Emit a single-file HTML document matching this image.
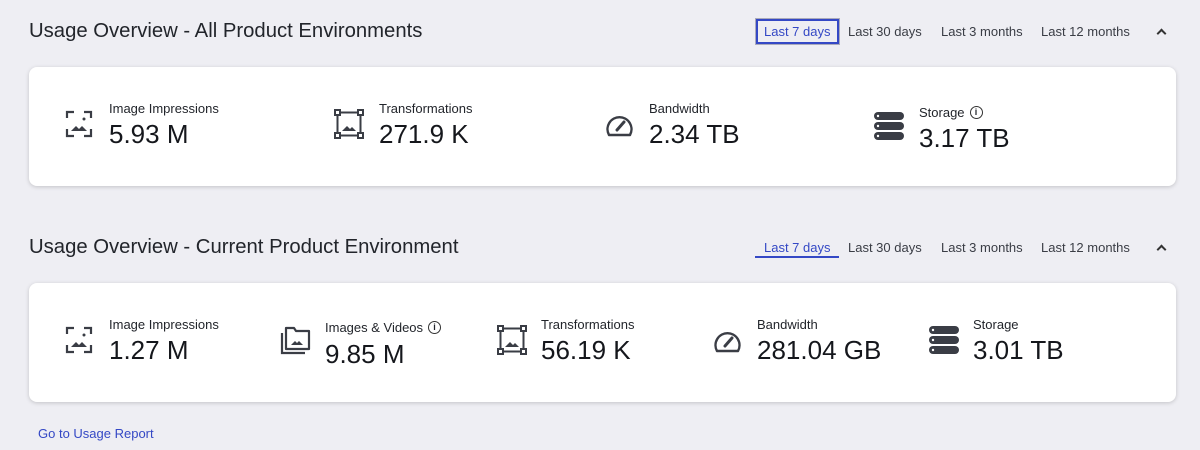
<!DOCTYPE html>
<html><head><meta charset="utf-8"><style>
*{margin:0;padding:0;box-sizing:border-box}
body{width:1200px;height:450px;background:#eeeef3;font-family:"Liberation Sans",sans-serif;color:#22252b;position:relative;overflow:hidden}
.a{position:absolute;white-space:nowrap}
.t{font-size:20.3px;color:#22252b}
.tab{font-size:13px;color:#3a3d45;top:24px}
.card{position:absolute;left:29px;width:1147px;height:119px;background:#fff;border-radius:8px;box-shadow:0 1px 4px rgba(0,0,0,.18)}
.l{font-size:13px;color:#22252b}
.v{font-size:26px;color:#15171c}
svg{position:absolute}
.info{display:inline-block;width:13px;height:13px;border:1.3px solid #333;border-radius:50%;font-size:9px;text-align:center;line-height:11px;margin-left:5px;vertical-align:2px;font-weight:bold}
.chev{position:absolute;width:7px;height:7px;border-left:2px solid #333;border-top:2px solid #333;transform:rotate(45deg)}
</style></head><body>
<div class="a t" style="left:29px;top:20px">Usage Overview - All Product Environments</div>
<div class="a" style="left:756px;top:19px;width:83px;height:25px;border:2px solid #3448c5;box-shadow:0 0 0 1px #aab"></div>
<div class="a tab" style="left:764px;color:#3448c5">Last 7 days</div>
<div class="a tab" style="left:848px">Last 30 days</div>
<div class="a tab" style="left:941px">Last 3 months</div>
<div class="a tab" style="left:1041px">Last 12 months</div>
<div class="chev" style="left:1158px;top:30px"></div>

<div class="card" style="top:67px"></div>
<svg style="left:65px;top:110px" width="28" height="28" viewBox="0 0 28 28" fill="none" stroke="#3a3d45" stroke-width="2.2"><path d="M2 8V2h7M19 2h7v6M2 19v7h7M19 26h7v-7"/><circle cx="19" cy="9" r="1.5" fill="#3a3d45" stroke="none"/><path d="M6 21l5-5 3 3 3-3 5 5z" fill="#3a3d45" stroke="none"/></svg>
<div class="a l" style="left:109px;top:101px">Image Impressions</div>
<div class="a v" style="left:109px;top:119px">5.93 M</div>
<svg style="left:333px;top:108px" width="32" height="32" viewBox="0 0 32 32" fill="none" stroke="#3a3d45" stroke-width="2"><rect x="2" y="2" width="5" height="5"/><rect x="25" y="2" width="5" height="5"/><rect x="2" y="25" width="5" height="5"/><rect x="25" y="25" width="5" height="5"/><path d="M7 4.5h18M7 27.5h18M4.5 7v18M27.5 7v18"/><path d="M9 23l5-5 3 3 2-2 4 4z" fill="#3a3d45" stroke="none"/></svg>
<div class="a l" style="left:379px;top:101px">Transformations</div>
<div class="a v" style="left:379px;top:119px">271.9 K</div>
<svg style="left:605px;top:113px" width="29" height="25" viewBox="0 0 29 25" fill="none" stroke="#3a3d45" stroke-width="2.4"><path d="M4 22A12 12 0 1 1 25 22z" stroke-linejoin="round"/><path d="M12 17l7-8" stroke-width="3" stroke-linecap="round"/></svg>
<div class="a l" style="left:649px;top:101px">Bandwidth</div>
<div class="a v" style="left:649px;top:119px">2.34 TB</div>
<svg style="left:874px;top:112px" width="30" height="28" viewBox="0 0 30 28" fill="#3a3d45"><rect x="0" y="0" width="30" height="8" rx="4"/><rect x="0" y="10" width="30" height="8" rx="4"/><rect x="0" y="20" width="30" height="8" rx="4"/><g fill="#fff"><circle cx="4" cy="4" r="1.2"/><circle cx="4" cy="14" r="1.2"/><circle cx="4" cy="24" r="1.2"/></g></svg>
<div class="a l" style="left:919px;top:105px">Storage<span class="info">i</span></div>
<div class="a v" style="left:919px;top:123px">3.17 TB</div>

<div class="a t" style="left:29px;top:236px">Usage Overview - Current Product Environment</div>
<div class="a" style="left:755px;top:256px;width:84px;height:2px;background:#3448c5"></div>
<div class="a tab" style="left:764px;top:240px;color:#3448c5">Last 7 days</div>
<div class="a tab" style="left:848px;top:240px">Last 30 days</div>
<div class="a tab" style="left:941px;top:240px">Last 3 months</div>
<div class="a tab" style="left:1041px;top:240px">Last 12 months</div>
<div class="chev" style="left:1158px;top:246px"></div>

<div class="card" style="top:283px"></div>
<svg style="left:65px;top:326px" width="28" height="28" viewBox="0 0 28 28" fill="none" stroke="#3a3d45" stroke-width="2.2"><path d="M2 8V2h7M19 2h7v6M2 19v7h7M19 26h7v-7"/><circle cx="19" cy="9" r="1.5" fill="#3a3d45" stroke="none"/><path d="M6 21l5-5 3 3 3-3 5 5z" fill="#3a3d45" stroke="none"/></svg>
<div class="a l" style="left:109px;top:317px">Image Impressions</div>
<div class="a v" style="left:109px;top:335px">1.27 M</div>
<svg style="left:279px;top:326px" width="32" height="30" viewBox="0 0 32 30" fill="none" stroke="#3a3d45" stroke-width="2.2"><path d="M7 2h8l2 3h13v18H7z" stroke-linejoin="round"/><path d="M3 7v20h23"/><path d="M12 19l4-4 2 2 2-2 4 4z" fill="#3a3d45" stroke="none"/></svg>
<div class="a l" style="left:325px;top:320px">Images &amp; Videos<span class="info">i</span></div>
<div class="a v" style="left:325px;top:339px">9.85 M</div>
<svg style="left:496px;top:324px" width="32" height="32" viewBox="0 0 32 32" fill="none" stroke="#3a3d45" stroke-width="2"><rect x="2" y="2" width="5" height="5"/><rect x="25" y="2" width="5" height="5"/><rect x="2" y="25" width="5" height="5"/><rect x="25" y="25" width="5" height="5"/><path d="M7 4.5h18M7 27.5h18M4.5 7v18M27.5 7v18"/><path d="M9 23l5-5 3 3 2-2 4 4z" fill="#3a3d45" stroke="none"/></svg>
<div class="a l" style="left:541px;top:317px">Transformations</div>
<div class="a v" style="left:541px;top:335px">56.19 K</div>
<svg style="left:713px;top:329px" width="29" height="25" viewBox="0 0 29 25" fill="none" stroke="#3a3d45" stroke-width="2.4"><path d="M4 22A12 12 0 1 1 25 22z" stroke-linejoin="round"/><path d="M12 17l7-8" stroke-width="3" stroke-linecap="round"/></svg>
<div class="a l" style="left:757px;top:317px">Bandwidth</div>
<div class="a v" style="left:757px;top:335px">281.04 GB</div>
<svg style="left:929px;top:326px" width="30" height="28" viewBox="0 0 30 28" fill="#3a3d45"><rect x="0" y="0" width="30" height="8" rx="4"/><rect x="0" y="10" width="30" height="8" rx="4"/><rect x="0" y="20" width="30" height="8" rx="4"/><g fill="#fff"><circle cx="4" cy="4" r="1.2"/><circle cx="4" cy="14" r="1.2"/><circle cx="4" cy="24" r="1.2"/></g></svg>
<div class="a l" style="left:973px;top:317px">Storage</div>
<div class="a v" style="left:973px;top:335px">3.01 TB</div>

<div class="a" style="left:38px;top:426px;font-size:13px;color:#3448c5">Go to Usage Report</div>
</body></html>
